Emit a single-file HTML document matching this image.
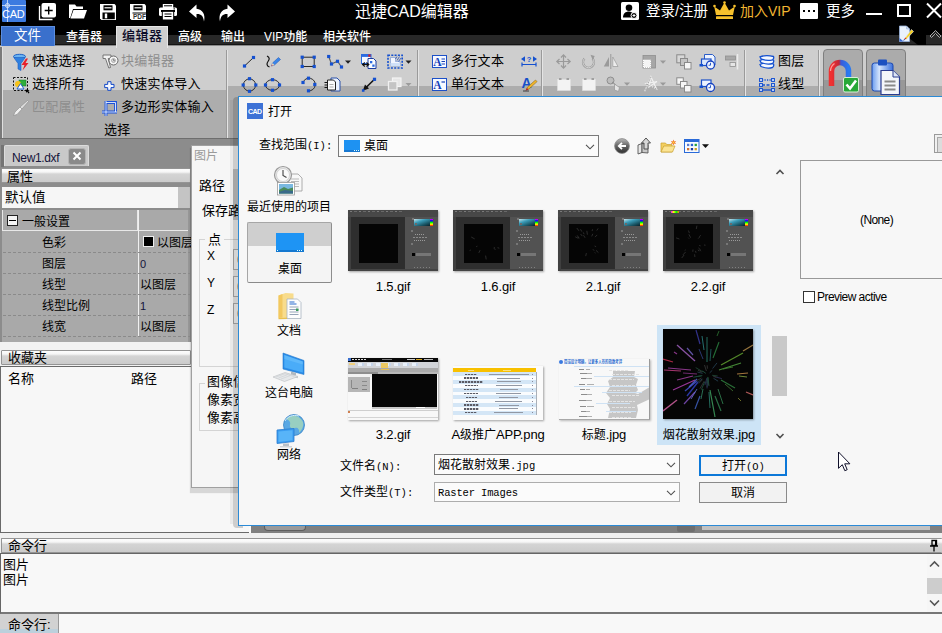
<!DOCTYPE html>
<html lang="zh-CN">
<head>
<meta charset="utf-8">
<title>迅捷CAD编辑器</title>
<style>
*{box-sizing:border-box;margin:0;padding:0}
html,body{width:942px;height:633px;overflow:hidden;background:#8c8c8c}
body{font-family:"Liberation Sans","Noto Sans CJK SC",sans-serif;font-size:13px;color:#000;position:relative}
#app{position:absolute;left:0;top:0;width:942px;height:633px;overflow:hidden;background:#8c8c8c}
.a{position:absolute}
.t{position:absolute;white-space:nowrap;line-height:1}
svg{position:absolute;overflow:visible}
/* title bar */
#title{left:0;top:0;width:942px;height:26px;background:#000}
#menu{left:0;top:26px;width:942px;height:20px;background:linear-gradient(#000 0,#000 9px,#282828 9px,#282828 18px,#141414 18px,#141414 19px,#8a8a8a 19px)}
.mt{color:#fff;font-size:12px;top:31px;font-weight:500}
/* ribbon */
#ribbon{left:0;top:46px;width:942px;height:93px;background:#cecece}
.dz{position:absolute;background:#adadad}
.rt{font-size:13px;color:#000;letter-spacing:0.3px}
.rg{color:#8e8e8e}
.sep{position:absolute;top:50px;height:88px;width:2px;background:linear-gradient(90deg,#9a9a9a 0,#9a9a9a 1px,#e4e4e4 1px)}

.hdr{background:linear-gradient(#fdfdfd 0,#f6f6f6 3px,#d4d4d4 5px,#cbcbcb 100%);border:1px solid #949494;border-radius:1px}
.pg{font-size:12px}
.dash{left:3px;width:187px;height:1px;background:repeating-linear-gradient(90deg,#8a8a8a 0,#8a8a8a 3px,transparent 3px,transparent 5px)}

.inp{width:40px;height:21px;background:#fff;border:1px solid #b4b4b4}
.inp:after{content:"0";position:absolute;left:3px;top:3px;font-size:12px;color:#888}

.od{font-size:12px}
.mono{font-family:"Liberation Mono","DejaVu Sans Mono",monospace;font-size:10.500px;letter-spacing:0}
.fl{font-size:13px;text-align:center;letter-spacing:-0.150px}
.fl span{font-size:12px;letter-spacing:0}
.th{box-shadow:1px 1px 2px rgba(0,0,0,0.350);overflow:hidden}
</style>
</head>
<body>
<div id="app">
<!-- TITLE BAR -->
<div id="title" class="a"></div>
<div id="menu" class="a"></div>
<div id="ribbon" class="a"></div>

<!-- logo -->
<div class="a" style="left:2px;top:0;width:24px;height:22px;background:#3d7be0;border-radius:1px"></div>
<div class="a" style="left:7px;top:0;width:1px;height:22px;background:#b9d0f5"></div>
<div class="a" style="left:2px;top:5px;width:24px;height:1px;background:#b9d0f5"></div>
<div class="a" style="left:5px;top:3px;width:5px;height:5px;border:1px solid #d5e3fa;border-radius:3px"></div>
<div class="t" style="left:2px;top:9px;font-size:11px;color:#fff;letter-spacing:-0.3px">CAD</div>
<!-- quick access icons -->
<svg style="left:38px;top:2px" width="20" height="20" viewBox="0 0 20 20"><path d="M1.5 4v13.5h13" fill="none" stroke="#fff" stroke-width="1.3"/><rect x="3.5" y="1" width="14.5" height="14.5" rx="2" fill="#fff"/><path d="M10.7 4.5v8M6.7 8.5h8" stroke="#000" stroke-width="1.4"/></svg>
<svg style="left:68px;top:3px" width="20" height="18" viewBox="0 0 20 18"><path d="M1 15V1.5h6l1.5 2H15V6H5L2.2 15z" fill="#fff"/><path d="M5.5 7H19l-3 8.5H2.5z" fill="#fff"/></svg>
<svg style="left:99px;top:3px" width="18" height="18" viewBox="0 0 18 18"><path d="M1 1h14.500L17 2.500V17H2.500L1 15.500z" fill="#fff"/><rect x="4.500" y="2.300" width="9" height="5" fill="#000"/><rect x="5.500" y="4.200" width="7" height="1.200" fill="#fff"/><rect x="3.500" y="9.500" width="12.300" height="6.700" fill="#000"/><rect x="5.800" y="10.500" width="2.400" height="4.800" fill="#fff"/></svg>
<svg style="left:129px;top:3px" width="18" height="18" viewBox="0 0 18 18"><path d="M1 1h14.500L17 2.500V17H2.500L1 15.500z" fill="#fff"/><rect x="4.500" y="2.300" width="9" height="5" fill="#000"/><rect x="5.500" y="4.200" width="7" height="1.200" fill="#fff"/><rect x="3.500" y="9.500" width="14" height="1" fill="#000"/><text x="10.500" y="16.300" font-size="6.500" font-weight="bold" text-anchor="middle" fill="#333" font-family="Liberation Sans, sans-serif">PDF</text></svg>
<svg style="left:158px;top:3px" width="20" height="18" viewBox="0 0 20 18"><rect x="4.800" y="1" width="10.400" height="4.500" fill="#fff"/><rect x="6" y="2.300" width="8" height="1" fill="#000"/><rect x="1" y="4.500" width="18" height="8.500" rx="1.500" fill="#fff"/><rect x="3" y="7" width="14" height="2" fill="#000"/><rect x="15.500" y="5.400" width="1.500" height="1" fill="#000"/><rect x="4.300" y="8.300" width="11.400" height="8.700" fill="#fff" stroke="#000" stroke-width="1"/><path d="M6.500 11h7M6.500 13.500h7" stroke="#000" stroke-width="1.100"/></svg>
<svg style="left:188px;top:3px" width="20" height="20" viewBox="0 0 20 20"><path d="M8.500 1.500L1 8.500l7.500 6.500V11c4.500-0.300 6.800 2 7.500 7.500 1.800-7-1.500-12.300-7.500-12.800z" fill="#fff"/></svg>
<svg style="left:216px;top:3px" width="20" height="20" viewBox="0 0 20 20"><path d="M11.500 1.500L19 8.500l-7.500 6.500V11c-4.500-0.300-6.800 2-7.500 7.500-1.800-7 1.500-12.300 7.500-12.800z" fill="#fff"/></svg>
<div class="t" style="left:355px;top:4px;font-size:16px;color:#fff">迅捷CAD编辑器</div>
<!-- right side -->
<svg style="left:621px;top:2px" width="18" height="18" viewBox="0 0 18 18"><rect x="0" y="0" width="18" height="18" rx="1.500" fill="#fff"/><circle cx="8" cy="5.800" r="3.300" fill="#000"/><path d="M2 15.500c0-4 2.500-6 6-6 2 0 3.500 1 4 2.500l-1 3.500z" fill="#000"/><circle cx="13" cy="13.500" r="3" fill="#000" stroke="#fff" stroke-width="1"/><path d="M13 12v3M11.500 13.500h3" stroke="#fff" stroke-width="1"/></svg>
<div class="t" style="left:646px;top:4px;font-size:14.500px;color:#fff">登录/注册</div>
<svg style="left:713px;top:1px" width="23" height="19" viewBox="0 0 23 19"><path d="M3 14L1.200 5.500l5.800 4L11.500 1.500l4.500 8 5.800-4L20 14z" fill="#f7c12c"/><circle cx="1.500" cy="5" r="1.300" fill="#f7c12c"/><circle cx="21.500" cy="5" r="1.300" fill="#f7c12c"/><circle cx="11.500" cy="1.500" r="1.300" fill="#f7c12c"/><rect x="3" y="15.300" width="17" height="2.700" rx="0.500" fill="#f7c12c"/></svg>
<div class="t" style="left:740px;top:4px;font-size:14px;color:#f2b632">加入VIP</div>
<div class="a" style="left:800px;top:3px;width:18px;height:16px;background:#fff;border-radius:1px"></div>
<div class="a" style="left:803px;top:10px;width:2px;height:2px;background:#000;box-shadow:5px 0 #000,10px 0 #000"></div>
<div class="t" style="left:826px;top:4px;font-size:14.500px;color:#fff">更多</div>
<div class="a" style="left:866px;top:13px;width:16px;height:2px;background:#fff"></div>
<div class="a" style="left:897px;top:4px;width:14px;height:13px;border:2px solid #fff"></div>
<svg style="left:926px;top:3px" width="16" height="15" viewBox="0 0 16 15"><path d="M1 0.500l14 14M15 0.500l-14 14" stroke="#fff" stroke-width="2" fill="none"/></svg>
<!-- menu -->
<div class="a" style="left:1px;top:26px;width:54px;height:20px;background:#3a70cc;border:1px solid #5b8ee0;border-bottom:none"></div>
<div class="t" style="left:14px;top:29px;font-size:13.500px;color:#fff">文件</div>
<div class="t mt" style="left:66px">查看器</div>
<div class="a" style="left:116px;top:26px;width:52px;height:22px;background:#cecece;border:1px solid #e6e6e6;border-bottom:none;z-index:2"></div>
<div class="t" style="left:122px;top:29px;font-size:13px;color:#0c0c28;font-weight:500;z-index:3;letter-spacing:0.5px">编辑器</div>
<div class="t mt" style="left:178px">高级</div>
<div class="t mt" style="left:221px">输出</div>
<div class="t mt" style="left:264px">VIP功能</div>
<div class="t mt" style="left:323px">相关软件</div>
<svg style="left:905px;top:35px" width="21" height="10" viewBox="0 0 21 10"><path d="M0 0L13 10h8V0z" fill="#000"/></svg>
<svg style="left:898px;top:25px" width="18" height="18" viewBox="0 0 18 18"><path d="M1.500 1h7l3 3v12.500h-10z" fill="#eaf2fc" stroke="#9ab4dc" stroke-width="0.800"/><path d="M8.500 1v3h3" fill="#c8d8f0" stroke="#9ab4dc" stroke-width="0.600"/><path d="M1.500 13l4 3.500h-4z" fill="#3a6ad0"/><path d="M13.500 4.500l2 2-7.500 8-2 0z" fill="#f4d020" stroke="#e8e8e8" stroke-width="0.600"/><path d="M6 14.500l1.500-2 1 1z" fill="#d02020"/><path d="M4.500 16l2-2 0.800 0.800z" fill="#2a50b0"/></svg>
<svg style="left:929px;top:29px" width="13" height="10" viewBox="0 0 13 10"><path d="M1 7l5.500-5.500L12 7l-1.500 1.500-4-4-4 4z" fill="#222" stroke="#b8b8b8" stroke-width="0.900"/></svg>
<div class="dz" style="left:3px;top:90px;width:223px;height:48px"></div>
<div class="dz" style="left:228px;top:86px;width:714px;height:52px"></div>

<div class="a" style="left:0;top:47px;width:2px;height:92px;background:#7a7a7a"></div>
<div class="a" style="left:2px;top:47px;width:1px;height:92px;background:#e0e0e0"></div>
<div class="a" style="left:0;top:138px;width:942px;height:1px;background:#6e6e6e"></div>
<!-- group 1 -->
<svg style="left:13px;top:54px" width="16" height="17" viewBox="0 0 16 17"><ellipse cx="6.500" cy="2.500" rx="6" ry="2.200" fill="#6db4f0" stroke="#1c62c8" stroke-width="1"/><path d="M0.800 3.500L5 9.500v5.500l3 1.500V9.500l4.200-6z" fill="#2f80e0" stroke="#1c5cc0" stroke-width="0.600"/><path d="M13 4.500L8.500 11h3L9.500 16.500 15.500 9h-3L15 4.500z" fill="#e8202a"/></svg>
<div class="t rt" style="left:32px;top:54px">快速选择</div>
<svg style="left:13px;top:77px" width="17" height="17" viewBox="0 0 17 17"><rect x="0.500" y="0.500" width="14" height="13" fill="none" stroke="#111" stroke-width="1" stroke-dasharray="2 1.500"/><rect x="6" y="3" width="7" height="6" fill="#2fae3c" stroke="#1a7a26" stroke-width="0.500"/><circle cx="5" cy="7" r="3" fill="#f6c21a"/><path d="M4 12l3.500-5.500L11 12z" fill="#fff" stroke="#2060d0" stroke-width="1"/><path d="M12.500 12.500l4 0.500-1.200 1 1.200 1.800-1 0.700-1.200-1.800-1.200 1z" fill="#000"/></svg>
<div class="t rt" style="left:32px;top:77px">选择所有</div>
<svg style="left:13px;top:100px" width="16" height="16" viewBox="0 0 16 16"><path d="M14.500 0.500l1 1L9 9 7 7z" fill="#dedede" stroke="#8a8a8a" stroke-width="0.600"/><path d="M7 7l2 2-5 5.500L0.500 15.500 2 12z" fill="#f0f0f0" stroke="#8a8a8a" stroke-width="0.600"/></svg>
<div class="t rt rg" style="left:32px;top:100px">匹配属性</div>
<svg style="left:102px;top:54px" width="17" height="15" viewBox="0 0 17 15"><path d="M1 1h8v3.500H6.200L8.500 13.500 6.800 14 3.500 4.500H1z" fill="#f2f2f2" stroke="#6a6a6a" stroke-width="0.900"/><circle cx="11.500" cy="6.500" r="4.500" fill="#f4f4f4" stroke="#6a6a6a" stroke-width="1"/><circle cx="11.500" cy="6.500" r="2" fill="#dcdcdc" stroke="#8a8a8a" stroke-width="0.600"/><path d="M11.500 5v1.700h1.500" stroke="#6a6a6a" stroke-width="0.700" fill="none"/></svg>
<div class="t rt rg" style="left:121px;top:54px">块编辑器</div>
<svg style="left:104px;top:81px" width="11" height="10" viewBox="0 0 11 10"><path d="M3.700 0.700h3.300v2.700h3v3.200h-3v2.700H3.700V6.600h-3V3.400h3z" fill="#f6f9ff" stroke="#1248c8" stroke-width="1"/></svg>
<div class="t rt" style="left:121px;top:77px">快速实体导入</div>
<svg style="left:102px;top:101px" width="16" height="16" viewBox="0 0 16 16"><path d="M4 0v15M0 11h15M4 1.500h9.500v9.500" fill="none" stroke="#1a50d8" stroke-width="2.800"/><path d="M4 0v15M0 11h15M4 1.500h9.500v9.500" fill="none" stroke="#e8f0ff" stroke-width="0.900"/></svg>
<div class="t rt" style="left:121px;top:100px">多边形实体输入</div>
<div class="t rt" style="left:104px;top:123px">选择</div>
<div class="sep" style="left:226px"></div>
<svg style="left:240px;top:53px" width="20" height="18" viewBox="240 53 20 18"><path d="M244.500 66L253.500 57.500" stroke="#2a2a2a" stroke-width="1"/><rect x="242.9" y="64.4" width="3.2" height="3.2" fill="#1450d0"/><rect x="251.9" y="55.9" width="3.2" height="3.2" fill="#1450d0"/></svg>
<svg style="left:264px;top:54px" width="18" height="16" viewBox="264 54 18 16"><path d="M267 56c3 1.500 2.500 3.500 1 5.500s-1.500 4.500 1.500 5.500" fill="none" stroke="#111" stroke-width="1.200"/><path d="M271.500 66l1-3 6-5.500 2 2-6 5.500z" fill="#3a86ea" stroke="#1c50b0" stroke-width="0.500"/><path d="M271.500 66l1-3 2 2z" fill="#f4d4b0"/><path d="M271.300 66.200l0.600-1.300 0.800 0.800z" fill="#d02020"/></svg>
<svg style="left:299px;top:54px" width="18" height="16" viewBox="299 54 18 16"><rect x="302.200" y="57.200" width="12" height="9.300" fill="none" stroke="#2a2a2a" stroke-width="1"/><rect x="300.6" y="55.6" width="3.2" height="3.2" fill="#1450d0"/><rect x="312.6" y="55.6" width="3.2" height="3.2" fill="#1450d0"/><rect x="300.6" y="64.9" width="3.2" height="3.2" fill="#1450d0"/><rect x="312.6" y="64.9" width="3.2" height="3.2" fill="#1450d0"/></svg>
<svg style="left:325px;top:53px" width="28" height="18" viewBox="325 53 28 18"><path d="M328.700 56.500L331.500 64 337.500 61.300 341.500 67" fill="none" stroke="#5a5a5a" stroke-width="1.100"/><rect x="327.1" y="54.9" width="3.2" height="3.2" fill="#1450d0"/><rect x="329.9" y="62.4" width="3.2" height="3.2" fill="#1450d0"/><rect x="335.9" y="59.7" width="3.2" height="3.2" fill="#1450d0"/><rect x="339.9" y="65.4" width="3.2" height="3.2" fill="#1450d0"/><path d="M345 60.500h6l-3 3.300z" fill="#222"/></svg>
<svg style="left:360px;top:53px" width="17" height="17" viewBox="360 53 17 17"><rect x="361.500" y="54.500" width="9.500" height="9" fill="#f4f8ff" stroke="#2a6ae0" stroke-width="1"/><rect x="361.500" y="54.500" width="9.500" height="2.400" fill="#2a6ae0"/><rect x="368.300" y="54.500" width="2.200" height="2.200" fill="#e01818"/><path d="M368 58.500h5.500l2.500 2.500v7.500h-8z" fill="#fafcff" stroke="#1c3ca0" stroke-width="1"/><rect x="370" y="61" width="2.300" height="2.300" fill="#2a6ae0"/><rect x="372.300" y="64.500" width="2.300" height="2.300" fill="#2a6ae0"/><path d="M363 64.500h5.500M366.500 62.500l2.300 2-2.300 2M364.800 62.500l-2.300 2 2.300 2" fill="none" stroke="#111" stroke-width="1.100"/></svg>
<svg style="left:386px;top:53px" width="28" height="18" viewBox="386 53 28 18"><rect x="388" y="55.200" width="14.200" height="12.800" fill="none" stroke="#1450d0" stroke-width="1.600" stroke-dasharray="2 1.300"/><path d="M390.500 57.500h5v4h4.500v4.500h-9.500z" fill="#f2f6ff" stroke="#6a8fd0" stroke-width="0.600"/><path d="M390.500 63h9.500v3h-9.500z" fill="#cfe0f8"/><path d="M397 56.500l-1.500 2.500M399.500 56.500l-2.500 4M401 58l-2.500 3.500" stroke="#2a50b0" stroke-width="0.800"/><path d="M405.500 60.500h6l-3 3.300z" fill="#222"/></svg>
<svg style="left:241px;top:76px" width="18" height="18" viewBox="241 76 18 18"><circle cx="249.500" cy="85" r="6.100" fill="none" stroke="#2a2a2a" stroke-width="1"/><rect x="247.9" y="77.1" width="3.2" height="3.2" fill="#1450d0"/><rect x="247.9" y="89.7" width="3.2" height="3.2" fill="#1450d0"/><rect x="241.6" y="83.4" width="3.2" height="3.2" fill="#1450d0"/><rect x="254.2" y="83.4" width="3.2" height="3.2" fill="#1450d0"/></svg>
<svg style="left:263px;top:76px" width="20" height="18" viewBox="263 76 20 18"><ellipse cx="272.500" cy="85" rx="7" ry="5.300" fill="none" stroke="#2a2a2a" stroke-width="1"/><rect x="270.9" y="78.1" width="3.2" height="3.2" fill="#1450d0"/><rect x="270.9" y="88.7" width="3.2" height="3.2" fill="#1450d0"/><rect x="263.9" y="83.4" width="3.2" height="3.2" fill="#1450d0"/><rect x="277.9" y="83.4" width="3.2" height="3.2" fill="#1450d0"/></svg>
<svg style="left:299px;top:75px" width="20" height="19" viewBox="299 75 20 19"><path d="M303 82.500A6.300 6.300 0 1 1 308.500 90.800" fill="none" stroke="#2a2a2a" stroke-width="1"/><rect x="301.4" y="80.9" width="3.2" height="3.2" fill="#1450d0"/><rect x="306.9" y="76.6" width="3.2" height="3.2" fill="#1450d0"/><rect x="313.2" y="82.9" width="3.2" height="3.2" fill="#1450d0"/><rect x="306.9" y="89.2" width="3.2" height="3.2" fill="#1450d0"/></svg>
<svg style="left:324px;top:77px" width="18" height="15" viewBox="324 77 18 15"><path d="M331 78h6l3 3v10h-9z" fill="#eaf1fd" stroke="#2a50a8" stroke-width="1"/><path d="M327.500 80h6l2 2v8h-8z" fill="#fafafa" stroke="#222" stroke-width="1"/><path d="M324.500 82.500h3M324.500 85h3M324.500 87.500h3" stroke="#111" stroke-width="1"/><path d="M329.500 84.500h4M329.500 87h4" stroke="#9a9a9a" stroke-width="0.800"/></svg>
<svg style="left:361px;top:77px" width="16" height="16" viewBox="361 77 16 16"><path d="M374.500 79.300L365 88.500" stroke="#111" stroke-width="1.600"/><path d="M362.800 90.800l2.200-6.300 4 4z" fill="#111"/><rect x="372.9" y="77.7" width="3.2" height="3.2" fill="#1450d0"/><rect x="361.9" y="89.2" width="2.6" height="2.6" fill="#1450d0"/></svg>
<svg style="left:386px;top:76px" width="28" height="17" viewBox="386 76 28 17"><rect x="392.500" y="78" width="8.500" height="8.500" fill="#e6e6e6" stroke="#f4f4f4" stroke-width="1.200"/><rect x="388.500" y="81.500" width="8.500" height="8.500" fill="#c4c4c4" stroke="#f0f0f0" stroke-width="1.300"/><path d="M405.500 83h6l-3 3.300z" fill="#9c9c9c"/></svg>
<div class="sep" style="left:417px"></div>
<svg style="left:432px;top:55px" width="15" height="13" viewBox="0 0 15 13"><rect x="0.500" y="0.500" width="14" height="12" fill="#f6f9ff" stroke="#1c50c8" stroke-width="1"/><text x="1.200" y="10.800" font-family="Liberation Serif, serif" font-weight="bold" font-size="11.500" fill="#1440b8">A</text><path d="M9.500 4h3.500M9.500 6.500h3.500M9.500 9h3.500" stroke="#1440b8" stroke-width="1"/></svg>
<div class="t rt" style="left:451px;top:54px">多行文本</div>
<svg style="left:432px;top:78px" width="15" height="13" viewBox="0 0 15 13"><rect x="0.500" y="0.500" width="14" height="12" fill="#f6f9ff" stroke="#1c50c8" stroke-width="1"/><text x="1.200" y="10.800" font-family="Liberation Serif, serif" font-weight="bold" font-size="11.500" fill="#1440b8">A</text><path d="M9.500 4h3.500" stroke="#1440b8" stroke-width="1.200"/></svg>
<div class="t rt" style="left:451px;top:77px">单行文本</div>
<svg style="left:521px;top:56px" width="16" height="11" viewBox="0 0 16 11"><path d="M0 3l4-2.800v5.600zM16 3l-4-2.800v5.600z" fill="#1450d0"/><text x="8" y="6" font-size="7.500" font-weight="bold" text-anchor="middle" fill="#1450d0" font-family="Liberation Sans, sans-serif">?</text><path d="M1 8.500h14M1 6.500v4M15 6.500v4" stroke="#1450d0" stroke-width="1.200" fill="none"/></svg>
<svg style="left:521px;top:76px" width="17" height="16" viewBox="0 0 17 16"><text x="0.500" y="12" font-family="Liberation Sans, sans-serif" font-weight="bold" font-size="14" fill="#1850c8">A</text><path d="M5.500 13.500l1-2.500L14.500 4l1.600 1.600L8 13z" fill="#f0b428" stroke="#7a5a18" stroke-width="0.500"/><path d="M4.500 14.800l1.300-2.800 1.800 1.600z" fill="#c02020"/><path d="M2 15h6" stroke="#222" stroke-width="0.800"/></svg>
<div class="sep" style="left:541px"></div>
<svg style="left:556px;top:54px" width="15" height="15" viewBox="0 0 15 15"><path d="M7.500 1v13M1 7.500h13" stroke="#9a9a9a" stroke-width="1.200"/><path d="M5 3.500L7.500 0.800 10 3.500M5 11.500l2.500 2.700 2.500-2.700M3.500 5L0.800 7.500 3.500 10M11.500 5l2.700 2.500-2.700 2.500" fill="none" stroke="#9a9a9a" stroke-width="1.200"/></svg>
<svg style="left:581px;top:54px" width="15" height="15" viewBox="0 0 15 15"><path d="M3.500 4.500A5.500 5.500 0 1 0 11.500 4.500" fill="none" stroke="#9a9a9a" stroke-width="2.200"/><path d="M3.500 4.500A5.500 5.500 0 1 0 11.500 4.500" fill="none" stroke="#e2e2e2" stroke-width="0.800"/><path d="M9.500 0.800l4.200 1.200-2 4z" fill="#9a9a9a"/></svg>
<svg style="left:603px;top:54px" width="16" height="15" viewBox="0 0 16 15"><path d="M7.800 0v15" stroke="#9a9a9a" stroke-width="1"/><path d="M6 3v9.500H0.800z" fill="#9a9a9a"/><path d="M9.800 3v9.500h5.200z" fill="#ededed" stroke="#9a9a9a" stroke-width="0.700"/></svg>
<svg style="left:642px;top:54px" width="26" height="15" viewBox="0 0 26 15"><rect x="1" y="1.500" width="12.500" height="12.500" fill="#a6a6a6" stroke="#8e8e8e" stroke-width="0.800"/><rect x="1.500" y="6" width="7" height="7.500" fill="#f4f4f4" stroke="#fff" stroke-width="1" stroke-dasharray="1 1"/><path d="M18 6.500h6l-3 3.300z" fill="#9a9a9a"/></svg>
<svg style="left:676px;top:54px" width="16" height="16" viewBox="0 0 16 16"><rect x="0.800" y="0.800" width="8" height="8" fill="#d8d8d8" stroke="#8a8a8a" stroke-width="1"/><rect x="4.500" y="4.500" width="7" height="7" fill="#c4c4c4" stroke="#8a8a8a" stroke-width="1"/><rect x="8.500" y="8.500" width="6.500" height="6.500" fill="#f6f6f6" stroke="#8a8a8a" stroke-width="1"/></svg>
<svg style="left:676px;top:77px" width="16" height="16" viewBox="0 0 16 16"><rect x="0.800" y="0.800" width="6.500" height="6.500" fill="#f6f6f6" stroke="#8a8a8a" stroke-width="1"/><rect x="4.500" y="4.500" width="6.500" height="6.500" fill="#f6f6f6" stroke="#8a8a8a" stroke-width="1"/><rect x="8.500" y="8.500" width="6.500" height="6.500" fill="#f6f6f6" stroke="#8a8a8a" stroke-width="1"/></svg>
<svg style="left:699px;top:53px" width="18" height="17" viewBox="0 0 18 17"><path d="M5.500 1.500h8l2.500 2.500v8h-10.500z" fill="#eef4ff" stroke="#2a5cc8" stroke-width="1"/><rect x="2.500" y="6" width="9.500" height="6.500" fill="#dce8fc" stroke="#1c50c8" stroke-width="1.200"/><rect x="0.500" y="11" width="3.500" height="2.500" fill="#1450d0"/><circle cx="11.500" cy="12" r="4" fill="#f2f6ff" stroke="#1440c0" stroke-width="1.300"/><path d="M11.500 9.800v2.400h-2" stroke="#2a5cc8" stroke-width="1" fill="none"/></svg>
<svg style="left:699px;top:79px" width="18" height="14" viewBox="0 0 18 14"><rect x="2.500" y="1" width="9.500" height="6.500" fill="#eef4ff" stroke="#1c50c8" stroke-width="1.200"/><rect x="0.500" y="6.500" width="3.500" height="2.500" fill="#1450d0"/><circle cx="11.500" cy="8.500" r="4" fill="#f2f6ff" stroke="#1440c0" stroke-width="1.300"/><path d="M11.500 6.300v2.400h-2" stroke="#2a5cc8" stroke-width="1" fill="none"/></svg>
<svg style="left:725px;top:54px" width="14" height="16" viewBox="0 0 14 16"><path d="M12.500 0v15.500" stroke="#ececec" stroke-width="1.500"/><rect x="0.500" y="2" width="10" height="4" fill="#a8a8a8" stroke="#909090" stroke-width="0.800"/><rect x="5" y="8.500" width="5.500" height="4" fill="#e6e6e6" stroke="#909090" stroke-width="0.800"/></svg>
<svg style="left:557px;top:78px" width="14" height="13" viewBox="0 0 14 13"><rect x="0.500" y="1.500" width="13" height="11" fill="#f3f3f3" stroke="#e0e0e0" stroke-width="0.600"/><rect x="2" y="0" width="2.500" height="2" fill="#a0a0a0"/><rect x="9.500" y="0" width="2.500" height="2" fill="#a0a0a0"/></svg>
<svg style="left:582px;top:78px" width="14" height="13" viewBox="0 0 14 13"><rect x="0.500" y="1.500" width="13" height="11" fill="#f3f3f3" stroke="#e0e0e0" stroke-width="0.600"/><rect x="2" y="0" width="2.500" height="2" fill="#a0a0a0"/><rect x="9.500" y="0" width="2.500" height="2" fill="#a0a0a0"/></svg>
<svg style="left:606px;top:76px" width="26" height="17" viewBox="0 0 26 17"><circle cx="4.500" cy="4.500" r="3.500" fill="#bdbdbd" stroke="#8e8e8e" stroke-width="1"/><path d="M6 6l4 3" stroke="#8e8e8e" stroke-width="1"/><path d="M8.500 8l5 3.500-1 4-4-1.500z" fill="#e4e4e4" stroke="#9a9a9a" stroke-width="0.800"/><path d="M18 6.500h6l-3 3.300z" fill="#9a9a9a"/></svg>
<svg style="left:643px;top:76px" width="26" height="17" viewBox="0 0 26 17"><path d="M8 1L1.500 15.500M8 1l-2 10 8-5.500-11 2 10.500 5.500z" fill="none" stroke="#f0f0f0" stroke-width="1.200"/><path d="M8 1L1.500 15.500M3 8l10.500 5" fill="none" stroke="#8a8a8a" stroke-width="0.700" stroke-dasharray="1.500 1"/><path d="M17 6.500h6l-3 3.300z" fill="#9a9a9a"/></svg>
<div class="sep" style="left:744px"></div>
<svg style="left:759px;top:55px" width="16" height="14" viewBox="0 0 16 14"><g fill="#f4f8ff" stroke="#1450d0" stroke-width="1.300"><path d="M1 9.500c4-2 9-2 13.500-0.500 0.500 1.500 0.500 2.500-1 3.500-4 1-8 0.500-11.500-1z"/><path d="M1 5.500c4-2 9-2 13.500-0.500 0.500 1.500 0.500 2.500-1 3.500-4 1-8 0.500-11.500-1z"/><path d="M1 1.800c4-1.500 9-1.500 13.500-0.300 0.500 1.500 0.500 2.500-1 3.300-4 1-8 0.500-11.500-1z"/></g></svg>
<div class="t rt" style="left:778px;top:54px">图层</div>
<svg style="left:759px;top:78px" width="16" height="14" viewBox="0 0 16 14"><g stroke="#1450d0" stroke-width="1.300" fill="none"><path d="M3 2h10" stroke-dasharray="1.200 1.300"/><path d="M3 7h10" stroke-dasharray="3 1.500"/><path d="M3 12h10"/></g><g fill="#fff" stroke="#1450d0" stroke-width="1.100"><rect x="0.600" y="0.600" width="2.800" height="2.800"/><rect x="12.600" y="0.600" width="2.800" height="2.800"/><rect x="0.600" y="5.600" width="2.800" height="2.800"/><rect x="12.600" y="5.600" width="2.800" height="2.800"/><rect x="0.600" y="10.600" width="2.800" height="2.800"/><rect x="12.600" y="10.600" width="2.800" height="2.800"/></g></svg>
<div class="t rt" style="left:778px;top:77px">线型</div>
<div class="sep" style="left:818px"></div>
<div class="a" style="left:823px;top:49px;width:40px;height:60px;border:1px solid #7e7e7e;border-radius:4px 4px 0 0;background:linear-gradient(#ababab 0,#ababab 30px,#989898 30px)"></div>
<div class="a" style="left:866px;top:49px;width:40px;height:60px;border:1px solid #7e7e7e;border-radius:4px 4px 0 0;background:linear-gradient(#ababab 0,#ababab 30px,#989898 30px)"></div>
<svg style="left:826px;top:58px" width="36" height="36" viewBox="0 0 36 36"><defs><linearGradient id="mg" x1="0" x2="1"><stop offset="0" stop-color="#f03030"/><stop offset="0.450" stop-color="#c02838"/><stop offset="0.550" stop-color="#3a5ad8"/><stop offset="1" stop-color="#2a7af0"/></linearGradient></defs><path d="M5.500 28V13a8.500 8.500 0 0 1 17 0v8" fill="none" stroke="url(#mg)" stroke-width="5.500"/><path d="M4.500 13a9.500 9.500 0 0 1 4-7.500" stroke="#ff9a9a" stroke-width="1.200" fill="none"/><rect x="17.500" y="19.500" width="15" height="14.500" rx="1.500" fill="#28a838" stroke="#d8f0d8" stroke-width="1"/><path d="M20.500 26.500l3.500 4 6-8" fill="none" stroke="#fff" stroke-width="2.600"/></svg>
<svg style="left:871px;top:58px" width="32" height="38" viewBox="0 0 32 38"><defs><linearGradient id="cb" x1="0" x2="1"><stop offset="0" stop-color="#6a9cf0"/><stop offset="0.350" stop-color="#d4e4fc"/><stop offset="1" stop-color="#3a70dc"/></linearGradient></defs><rect x="1" y="5" width="21" height="28" rx="2.500" fill="url(#cb)" stroke="#1a48b0" stroke-width="1"/><rect x="7" y="1.500" width="9" height="6" rx="1" fill="#1c50c0"/><path d="M10 12.500h12l6.500 6.500V36.500H10z" fill="#f4f6fa" stroke="#2a3c90" stroke-width="1.200"/><path d="M22 12.500v6.500h6.500" fill="#dfe6f4" stroke="#2a3c90" stroke-width="1"/><path d="M13.500 23.500h11M13.500 27.500h11M13.500 31.500h11" stroke="#8a8a8a" stroke-width="2"/></svg>

<!-- doc tab -->
<div class="a" style="left:4px;top:145px;width:85px;height:21px;background:#c9c9c9;border:1px solid #dcdcdc;border-bottom:none;border-radius:2px 2px 0 0"></div>
<div class="t" style="left:12px;top:152px;font-size:12px;color:#14143a;letter-spacing:-0.35px">New1.dxf</div>
<div class="a" style="left:68px;top:148px;width:18px;height:17px;background:#8a8a8a;border:1px solid #b4b4b4;border-radius:3px"></div>
<svg style="left:72px;top:151px" width="10" height="10" viewBox="0 0 10 10"><path d="M1.500 1.500l7 7M8.500 1.500l-7 7" stroke="#fff" stroke-width="2"/></svg>
<!-- left panel -->
<div class="a" style="left:1px;top:145px;width:3px;height:22px;background:#747474"></div>
<div class="a hdr" style="left:1px;top:168px;width:190px;height:15px"></div>
<div class="t" style="left:7px;top:170px;font-size:13px">属性</div>
<div class="a" style="left:2px;top:187px;width:188px;height:21px;background:#f6f6f6"></div>
<div class="a" style="left:178px;top:187px;width:12px;height:21px;background:#c4c4c4"></div>
<div class="t" style="left:5px;top:191px;font-size:13.500px">默认值</div>
<div class="a" style="left:2px;top:210px;width:188px;height:132px;background:#a9a9a9"></div>
<div class="a" style="left:2px;top:210px;width:136px;height:21px;border:1px solid #e8e8e8;border-top:none"></div>
<div class="a" style="left:138px;top:210px;width:1px;height:127px;background:#f0f0f0"></div>
<div class="a" style="left:139px;top:230px;width:51px;height:1px;background:#e8e8e8"></div>
<div class="a" style="left:188px;top:210px;width:2px;height:132px;background:#969696"></div>
<div class="a" style="left:7px;top:215px;width:11px;height:11px;background:#f4f4f4;border:1px solid #222"></div>
<div class="a" style="left:9px;top:220px;width:7px;height:1px;background:#000"></div>
<div class="t pg" style="left:22px;top:216px">一般设置</div>
<div class="a dash" style="top:252px"></div><div class="a dash" style="top:273px"></div><div class="a dash" style="top:294px"></div><div class="a dash" style="top:315px"></div><div class="a dash" style="top:336px"></div>
<div class="t pg" style="left:42px;top:237px">色彩</div>
<div class="t pg" style="left:42px;top:258px">图层</div>
<div class="t pg" style="left:42px;top:279px">线型</div>
<div class="t pg" style="left:42px;top:300px">线型比例</div>
<div class="t pg" style="left:42px;top:321px">线宽</div>
<div class="a" style="left:143px;top:236px;width:11px;height:11px;background:#000;border:1px solid #eee"></div>
<div class="t pg" style="left:157px;top:237px">以图层</div>
<div class="t pg" style="left:140px;top:259px;font-size:11px;color:#14143a">0</div>
<div class="t pg" style="left:140px;top:279px">以图层</div>
<div class="t pg" style="left:140px;top:301px;font-size:11px;color:#14143a">1</div>
<div class="t pg" style="left:140px;top:321px">以图层</div>
<div class="a" style="left:0;top:342px;width:191px;height:25px;background:#f2f2f2"></div>
<div class="a hdr" style="left:1px;top:350px;width:190px;height:15px"></div>
<div class="t" style="left:8px;top:351px;font-size:13px">收藏夹</div>
<div class="a" style="left:0;top:366px;width:250px;height:167px;background:#f7f7f7;border:1px solid #6a6a6a;border-right:none"></div>
<div class="t" style="left:8px;top:372px;font-size:13px">名称</div>
<div class="t" style="left:131px;top:372px;font-size:13px">路径</div>
<!-- area behind dialog bottom -->
<div class="a" style="left:250px;top:366px;width:692px;height:167px;background:#808080"></div>
<div class="a" style="left:0;top:533px;width:942px;height:21px;background:#f0f0f0"></div>
<div class="a" style="left:249px;top:366px;width:2px;height:167px;background:#fafafa"></div>
<div class="a" style="left:264px;top:525px;width:42px;height:6px;background:#9a9a9a;border:1px solid #5e5e5e;border-top:none;border-radius:0 0 4px 4px"></div>
<div class="a" style="left:677px;top:525px;width:18px;height:7px;background:#6e6e6e;border-radius:0 0 2px 2px"></div>
<div class="a" style="left:702px;top:526px;width:228px;height:4px;background:#c2c2c2"></div>
<!-- command panel -->
<div class="a hdr" style="left:1px;top:538px;width:941px;height:15px;border-right:none"></div>
<div class="t" style="left:8px;top:539px;font-size:13px">命令行</div>
<svg style="left:929px;top:540px" width="10" height="12" viewBox="0 0 10 12"><path d="M3 0.500h4.500v5H3zM1 6h8M5 6v5.500" stroke="#000" stroke-width="1.300" fill="none"/><path d="M6 0.500h1.500v5H6z" fill="#000"/></svg>
<div class="a" style="left:0;top:553px;width:942px;height:61px;background:#f8f8f8;border:1px solid #666;border-right:none;border-bottom:2px solid #777"></div>
<div class="t" style="left:3px;top:558px;font-size:13px">图片</div>
<div class="t" style="left:3px;top:573px;font-size:13px">图片</div>
<div class="a" style="left:927px;top:554px;width:15px;height:58px;background:#f6f6f6"></div>
<svg style="left:928px;top:560px" width="13" height="8" viewBox="0 0 13 8"><path d="M2 6.500l4.500-4.500 4.500 4.500" stroke="#555" stroke-width="1.600" fill="none"/></svg>
<div class="a" style="left:927px;top:578px;width:15px;height:16px;background:#cdcdcd"></div>
<svg style="left:928px;top:599px" width="13" height="8" viewBox="0 0 13 8"><path d="M2 1.500l4.500 4.500 4.500-4.500" stroke="#555" stroke-width="1.600" fill="none"/></svg>
<div class="a" style="left:0;top:614px;width:942px;height:19px;background:#f8f8f8"></div>
<div class="a" style="left:0;top:614px;width:59px;height:19px;background:linear-gradient(#d2d2d2 0,#d2d2d2 15px,#bcd0dc 15px);border-right:1px solid #999"></div>
<div class="t" style="left:8px;top:618px;font-size:13px">命令行:</div>

<!-- 图片 dialog -->
<div class="a" style="left:191px;top:145px;width:60px;height:343px;background:#f6f6f6;border:1px solid #a0a0a0;box-shadow:0 4px 1px 1px rgba(0,0,0,0.130)"></div>
<div class="t" style="left:194px;top:150px;font-size:12px;color:#9a9a9a">图片</div>
<div class="a" style="left:233px;top:169px;width:10px;height:51px;background:#c8c8c8"></div>
<div class="t" style="left:199px;top:179px;font-size:13px">路径</div>
<div class="t" style="left:202px;top:204px;font-size:13px">保存路径</div>
<div class="a" style="left:199px;top:239px;width:60px;height:128px;border:1px solid #d4d4d4"></div>
<div class="t" style="left:205px;top:233px;font-size:13px;background:#f6f6f6;padding:0 3px">点</div>
<div class="t" style="left:207px;top:250px;font-size:12px">X</div>
<div class="t" style="left:207px;top:277px;font-size:12px">Y</div>
<div class="t" style="left:207px;top:304px;font-size:12px">Z</div>
<div class="a inp" style="left:233px;top:249px"></div><div class="a inp" style="left:233px;top:276px"></div><div class="a inp" style="left:233px;top:303px"></div>
<div class="a" style="left:199px;top:383px;width:60px;height:48px;border:1px solid #d4d4d4"></div>
<div class="t" style="left:205px;top:375px;font-size:13px;background:#f6f6f6;padding:0 2px">图像信息</div>
<div class="t" style="left:207px;top:393px;font-size:13px">像素宽</div>
<div class="t" style="left:207px;top:411px;font-size:13px">像素高</div>

<!-- Open dialog -->
<div class="a" style="left:233px;top:97px;width:10px;height:431px;background:rgba(0,0,0,0.170);border-radius:4px 0 0 4px"></div>
<div class="a" style="left:230px;top:100px;width:3px;height:424px;background:rgba(0,0,0,0.050)"></div>
<div class="a" id="odlg" style="left:238px;top:96px;width:720px;height:430px;background:#f7f7f7;border:1px solid #2b8ad6"></div>
<div class="a" style="left:247px;top:103px;width:16px;height:16px;background:#3d72d6"></div>
<div class="t" style="left:248px;top:108px;font-size:7px;font-weight:bold;color:#fff;letter-spacing:-0.600px">CAD</div>
<div class="t od" style="left:268px;top:106px">打开</div>
<div class="t od" style="left:259px;top:139px">查找范围<span class="mono">(I):</span></div>
<div class="a" style="left:338px;top:135px;width:261px;height:22px;background:#fbfbfb;border:1px solid #7a7a7a"></div>
<div class="a" style="left:344px;top:140px;width:16px;height:12px;background:#1e92f2;border-bottom:2px solid #1878d0"></div>
<div class="a" style="left:354px;top:150px;width:5px;height:1px;background:repeating-linear-gradient(90deg,#dff 0,#dff 1px,transparent 1px,transparent 2px)"></div>
<div class="t od" style="left:364px;top:140px">桌面</div>
<svg style="left:585px;top:144px" width="10" height="6" viewBox="0 0 10 6"><path d="M1 0.800l4 4 4-4" fill="none" stroke="#505050" stroke-width="1.100"/></svg>
<!-- toolbar icons -->
<svg style="left:614px;top:138px" width="16" height="16" viewBox="0 0 16 16"><defs><linearGradient id="bk" x1="0" y1="0" x2="0" y2="1"><stop offset="0" stop-color="#b8b8b8"/><stop offset="0.450" stop-color="#6a6a6a"/><stop offset="1" stop-color="#2e2e2e"/></linearGradient></defs><circle cx="8" cy="8" r="7.400" fill="url(#bk)" stroke="#8a8a8a" stroke-width="0.800"/><path d="M12 8H5.500M8 4.800L4.800 8 8 11.200" stroke="#fff" stroke-width="1.800" fill="none"/></svg>
<svg style="left:636px;top:137px" width="16" height="18" viewBox="0 0 16 18"><path d="M2 8l4-1.500v9L2 17z" fill="#e8e8e8" stroke="#555" stroke-width="0.900"/><path d="M6 6.500l6 1v8.500l-6-0.500z" fill="#c8c8c8" stroke="#555" stroke-width="0.900"/><path d="M10 1l4.500 5h-2.500v6h-4V6H5.500z" fill="#d8d8d8" stroke="#444" stroke-width="0.900"/></svg>
<svg style="left:660px;top:139px" width="18" height="15" viewBox="0 0 18 15"><path d="M1 13V4h4.500l1.200 1.500H12V13z" fill="#f4d060" stroke="#c8a030" stroke-width="0.700"/><path d="M1 13l2.800-6H15l-2.500 6z" fill="#fbe494" stroke="#c8a030" stroke-width="0.700"/><path d="M13.500 0.500l0.700 1.900 2-0.500-1.300 1.600 1.300 1.600-2-0.500-0.700 1.900-0.700-1.900-2 0.500 1.300-1.600-1.300-1.600 2 0.500z" fill="#f06a18"/><circle cx="13.500" cy="3.500" r="1" fill="#ffd040"/></svg>
<svg style="left:684px;top:139px" width="26" height="14" viewBox="0 0 26 14"><rect x="0.500" y="0.500" width="14.500" height="13" fill="#f8fbff" stroke="#2a6ad8" stroke-width="1"/><rect x="0.500" y="0.500" width="14.500" height="2.500" fill="#2a6ad8"/><g><rect x="3" y="4.800" width="2.300" height="2.300" fill="#5a7ad0"/><rect x="6.800" y="4.800" width="2.300" height="2.300" fill="#2a60d0"/><rect x="10.600" y="4.800" width="2.300" height="2.300" fill="#20a040"/><rect x="3" y="9" width="2.300" height="2.300" fill="#d07030"/><rect x="6.800" y="9" width="2.300" height="2.300" fill="#1a3aa0"/><rect x="10.600" y="9" width="2.300" height="2.300" fill="#d0a020"/></g><path d="M18 5.300h7l-3.500 3.700z" fill="#111"/></svg>
<div class="a" style="left:934px;top:134px;width:12px;height:19px;background:#dcdcdc;border:1px solid #9a9a9a;box-shadow:inset 2px 2px 0 #f0f0f0,inset 3px 3px 0 #a8a8a8"></div>
<!-- preview -->
<div class="a" style="left:800px;top:160px;width:150px;height:119px;background:#f7f7f7;border:1px solid #999"></div>
<div class="t" style="left:860px;top:214px;font-size:12px;letter-spacing:-0.600px">(None)</div>
<div class="a" style="left:803px;top:291px;width:12px;height:12px;background:#fff;border:1px solid #333"></div>
<div class="t" style="left:817px;top:291px;font-size:12px;letter-spacing:-0.550px">Preview active</div>
<!-- places bar -->
<div class="a" style="left:247px;top:222px;width:85px;height:61px;border:1px solid #a6a6a6;border-bottom-color:#8a8a8a;border-right-color:#8e8e8e;border-radius:2px;background:linear-gradient(#cfcfcf 0,#cfcfcf 23px,#f4f4f4 23px)"></div>
<div class="t od" style="left:247px;top:201px">最近使用的项目</div>
<div class="t od" style="left:278px;top:263px">桌面</div>
<div class="t od" style="left:277px;top:325px">文档</div>
<div class="t od" style="left:265px;top:387px">这台电脑</div>
<div class="t od" style="left:277px;top:449px">网络</div>
<!-- recent icon -->
<svg style="left:273px;top:165px" width="32" height="32" viewBox="0 0 32 32"><path d="M15 9h10l4 4v13H15z" fill="#f8f8f8" stroke="#9a9a9a" stroke-width="0.800"/><path d="M18 14h8M18 16.500h8M18 19h8M18 21.500h8" stroke="#aaa" stroke-width="0.800"/><circle cx="10" cy="10" r="8.500" fill="#e8e8e8" stroke="#9a9a9a" stroke-width="1.200"/><circle cx="10" cy="10" r="6.500" fill="#fafafa" stroke="#c0c0c0" stroke-width="0.600"/><path d="M10 5v5.500l3.500 2" stroke="#444" stroke-width="1.100" fill="none"/><rect x="4.500" y="17.500" width="17" height="12.500" fill="#fff" stroke="#9a9a9a" stroke-width="0.800"/><rect x="6" y="19" width="14" height="9.500" fill="#7ab8e0"/><path d="M6 25l5-3 4 2 5-1.500v6H6z" fill="#4a8a5a"/><path d="M6 27l6-2 8 1v2.500H6z" fill="#3a6a8a"/></svg>
<!-- desktop icon -->
<div class="a" style="left:276px;top:233px;width:28px;height:19px;background:#1e94f4;border-bottom:2px solid #1478d0"></div>
<div class="a" style="left:277px;top:250px;width:26px;height:1px;background:linear-gradient(90deg,#dff 0,#dff 1px,transparent 1px,transparent 20px,#dff 20px,#dff 21px,transparent 21px,transparent 22px,#dff 22px,#dff 23px,transparent 23px,transparent 24px,#dff 24px,#dff 25px,transparent 25px)"></div>
<!-- documents icon -->
<svg style="left:277px;top:291px" width="26" height="30" viewBox="0 0 26 30"><path d="M1.500 4.500l7-2.500 8 0.500v24l-15 0.500z" fill="#f8dc8c"/><path d="M1.500 4.500l4-1.500v23.500l-4 0.500z" fill="#f2c860"/><path d="M10 8h10.500l3.500 3.500v16H10z" fill="#fdfdfd" stroke="#a8b4c0" stroke-width="0.800"/><path d="M12.500 11h5M12.500 13h7" stroke="#2a6cd0" stroke-width="1.200"/><path d="M12.500 16h9M12.500 18.500h9M12.500 21h9M12.500 23.500h9" stroke="#8a9ab0" stroke-width="0.900"/><rect x="19" y="17.500" width="2.500" height="2.500" fill="#3a9a5a"/><path d="M1.500 27l8.500-0.500v1.500l-8.500 0.300z" fill="#e8c050"/></svg>
<!-- this pc icon -->
<svg style="left:272px;top:351px" width="34" height="32" viewBox="0 0 34 32"><path d="M11 2l21 7.500v14L11 18z" fill="#2a8ce8" stroke="#2478cc" stroke-width="0.600"/><path d="M12.300 4l18.500 6.600v11L12.300 16.500z" fill="#4aacf8"/><path d="M12.300 4l18.500 6.600v3L12.300 8z" fill="#6cc0fc" opacity=".6"/><path d="M19 20.500l5 1.500v2.500l-5-1z" fill="#b0b8c0"/><path d="M16 23.500l10 2.500v1.200l-10-2.200z" fill="#c8ccd0"/><path d="M1 26l12-4.500 13 4-13.500 5z" fill="#e6e8ea" stroke="#b8bcc0" stroke-width="0.600"/><path d="M4 26l9-3.300 9.500 3M6.500 27l9-3.300M9 28l9-3.300" stroke="#c4c8cc" stroke-width="0.500" fill="none"/></svg>
<!-- network icon -->
<svg style="left:274px;top:413px" width="32" height="36" viewBox="0 0 32 36"><circle cx="20" cy="12" r="10.500" fill="#5aa8e4" stroke="#3a84c4" stroke-width="0.800"/><path d="M12 6c3 1 5 3 4 6s3 4 5 3 5 1 4 5c3-3 5-7 4-11-3-6-10-9-17-3z" fill="#a8d8b8" opacity=".8"/><path d="M11 8c2-4 8-7 14-5" stroke="#d0ecff" stroke-width="1" fill="none"/><path d="M3 17l17-1.500v13L3 30.500z" fill="#3a9cf0" stroke="#2a7cd0" stroke-width="0.800"/><path d="M4.500 18.500l14-1.200v10L4.500 29z" fill="#58b4f8"/><path d="M9 30.500h6v2.500H9z" fill="#b8c0c8"/><path d="M6 33h12v1.500H6z" fill="#d0d4d8"/></svg>
<!-- file list scrollbar -->
<svg style="left:775px;top:168px" width="10" height="8" viewBox="0 0 10 8"><path d="M1.500 6l3.500-3.500 3.500 3.500" fill="none" stroke="#505050" stroke-width="1.600"/></svg>
<div class="a" style="left:772px;top:336px;width:15px;height:60px;background:#c9c9c9"></div>
<svg style="left:775px;top:432px" width="10" height="8" viewBox="0 0 10 8"><path d="M1.500 2l3.500 3.500 3.500-3.500" fill="none" stroke="#505050" stroke-width="1.600"/></svg>
<!-- selected highlight -->
<div class="a" style="left:657px;top:325px;width:104px;height:120px;background:#cde4f6"></div>
<div class="a th" style="left:348px;top:210px;width:90px;height:61px;background:#525252"><div class="a" style="left:0;top:0;width:90px;height:4px;background:#474747"></div><div class="a" style="left:2px;top:1px;width:52px;height:1px;background:repeating-linear-gradient(90deg,#7a7a7a 0,#7a7a7a 2px,transparent 2px,transparent 4px,#686868 4px,#686868 7px,transparent 7px,transparent 9px)"></div><div class="a" style="left:4px;top:5px;width:40px;height:1px;background:repeating-linear-gradient(90deg,#747474 0,#747474 5px,transparent 5px,transparent 13px)"></div><div class="a" style="left:1px;top:9px;width:2px;height:48px;background:repeating-linear-gradient(#8e8e8e 0,#8e8e8e 1px,transparent 1px,transparent 3px)"></div><div class="a" style="left:66px;top:57px;width:18px;height:1px;background:repeating-linear-gradient(90deg,#808080 0,#808080 1px,transparent 1px,transparent 3px)"></div><div class="a" style="left:0;top:4px;width:90px;height:3px;background:#484848"></div><div class="a" style="left:0;top:7px;width:3px;height:54px;background:#404040"></div><div class="a" style="left:3px;top:7px;width:54px;height:52px;background:#2e2e2e"></div><div class="a" style="left:11px;top:14px;width:39px;height:39px;background:#050505"></div><div class="a" style="left:66px;top:9px;width:16px;height:7px;background:linear-gradient(160deg,#c8e4ea 0,#3a9cb8 35%,#1a5868 70%,#082028 100%)"></div><div class="a" style="left:82px;top:9px;width:3px;height:7px;background:linear-gradient(#f0f,#00f,#0f0,#ff0,#f00)"></div><div class="a" style="left:64px;top:43px;width:3px;height:3px;background:#000"></div><div class="a" style="left:68px;top:43px;width:15px;height:3px;background:#767676"></div><div class="a" style="left:67px;top:24px;width:10px;height:1px;background:repeating-linear-gradient(90deg,#9a9a9a 0,#9a9a9a 1px,transparent 1px,transparent 2px)"></div><div class="a" style="left:65px;top:27px;width:14px;height:1px;background:repeating-linear-gradient(90deg,#8c8c8c 0,#8c8c8c 2px,transparent 2px,transparent 3px)"></div><div class="a" style="left:66px;top:30px;width:12px;height:1px;background:repeating-linear-gradient(90deg,#9a9a9a 0,#9a9a9a 1px,transparent 1px,transparent 2px)"></div><div class="a" style="left:63px;top:20px;width:2px;height:2px;background:#777;box-shadow:0 13px 0 #777,1px -12px 0 #777,4px -7px 0 #6a6a6a"></div><div class="a" style="left:3px;top:59px;width:87px;height:2px;background:#444"></div></div><div class="a th" style="left:453px;top:210px;width:90px;height:61px;background:#525252"><div class="a" style="left:0;top:0;width:90px;height:4px;background:#474747"></div><div class="a" style="left:2px;top:1px;width:52px;height:1px;background:repeating-linear-gradient(90deg,#7a7a7a 0,#7a7a7a 2px,transparent 2px,transparent 4px,#686868 4px,#686868 7px,transparent 7px,transparent 9px)"></div><div class="a" style="left:4px;top:5px;width:40px;height:1px;background:repeating-linear-gradient(90deg,#747474 0,#747474 5px,transparent 5px,transparent 13px)"></div><div class="a" style="left:1px;top:9px;width:2px;height:48px;background:repeating-linear-gradient(#8e8e8e 0,#8e8e8e 1px,transparent 1px,transparent 3px)"></div><div class="a" style="left:66px;top:57px;width:18px;height:1px;background:repeating-linear-gradient(90deg,#808080 0,#808080 1px,transparent 1px,transparent 3px)"></div><div class="a" style="left:0;top:4px;width:90px;height:3px;background:#484848"></div><div class="a" style="left:0;top:7px;width:3px;height:54px;background:#404040"></div><div class="a" style="left:3px;top:7px;width:54px;height:52px;background:#2e2e2e"></div><div class="a" style="left:11px;top:14px;width:39px;height:39px;background:#050505"></div><div class="a" style="left:66px;top:9px;width:16px;height:7px;background:linear-gradient(160deg,#c8e4ea 0,#3a9cb8 35%,#1a5868 70%,#082028 100%)"></div><div class="a" style="left:82px;top:9px;width:3px;height:7px;background:linear-gradient(#f0f,#00f,#0f0,#ff0,#f00)"></div><div class="a" style="left:64px;top:43px;width:3px;height:3px;background:#000"></div><div class="a" style="left:68px;top:43px;width:15px;height:3px;background:#767676"></div><div class="a" style="left:67px;top:24px;width:10px;height:1px;background:repeating-linear-gradient(90deg,#9a9a9a 0,#9a9a9a 1px,transparent 1px,transparent 2px)"></div><div class="a" style="left:65px;top:27px;width:14px;height:1px;background:repeating-linear-gradient(90deg,#8c8c8c 0,#8c8c8c 2px,transparent 2px,transparent 3px)"></div><div class="a" style="left:66px;top:30px;width:12px;height:1px;background:repeating-linear-gradient(90deg,#9a9a9a 0,#9a9a9a 1px,transparent 1px,transparent 2px)"></div><div class="a" style="left:63px;top:20px;width:2px;height:2px;background:#777;box-shadow:0 13px 0 #777,1px -12px 0 #777,4px -7px 0 #6a6a6a"></div><div class="a" style="left:3px;top:59px;width:87px;height:2px;background:#444"></div><svg style="left:11px;top:14px" width="39" height="39" viewBox="0 0 39 39"><path d="M16.1 26.2L14.8 28.9" stroke="#444" stroke-width="0.600"/><path d="M29.7 24.5L31.6 25.4" stroke="#444" stroke-width="0.600"/><path d="M29.8 23.4L30.9 23.8" stroke="#444" stroke-width="0.600"/><path d="M13.4 22.2L12.2 22.7" stroke="#444" stroke-width="0.600"/><path d="M6.8 26.0L5.6 26.6" stroke="#444" stroke-width="0.600"/><path d="M21.6 31.6L22.2 35.4" stroke="#444" stroke-width="0.600"/><path d="M10.7 14.9L7.2 13.0" stroke="#444" stroke-width="0.600"/><path d="M33.5 23.7L35.3 24.2" stroke="#444" stroke-width="0.600"/></svg></div><div class="a th" style="left:558px;top:210px;width:90px;height:61px;background:#525252"><div class="a" style="left:0;top:0;width:90px;height:4px;background:#474747"></div><div class="a" style="left:2px;top:1px;width:52px;height:1px;background:repeating-linear-gradient(90deg,#7a7a7a 0,#7a7a7a 2px,transparent 2px,transparent 4px,#686868 4px,#686868 7px,transparent 7px,transparent 9px)"></div><div class="a" style="left:4px;top:5px;width:40px;height:1px;background:repeating-linear-gradient(90deg,#747474 0,#747474 5px,transparent 5px,transparent 13px)"></div><div class="a" style="left:1px;top:9px;width:2px;height:48px;background:repeating-linear-gradient(#8e8e8e 0,#8e8e8e 1px,transparent 1px,transparent 3px)"></div><div class="a" style="left:66px;top:57px;width:18px;height:1px;background:repeating-linear-gradient(90deg,#808080 0,#808080 1px,transparent 1px,transparent 3px)"></div><div class="a" style="left:0;top:4px;width:90px;height:3px;background:#484848"></div><div class="a" style="left:0;top:7px;width:3px;height:54px;background:#404040"></div><div class="a" style="left:3px;top:7px;width:54px;height:52px;background:#2e2e2e"></div><div class="a" style="left:11px;top:14px;width:39px;height:39px;background:#050505"></div><div class="a" style="left:66px;top:9px;width:16px;height:7px;background:linear-gradient(160deg,#c8e4ea 0,#3a9cb8 35%,#1a5868 70%,#082028 100%)"></div><div class="a" style="left:82px;top:9px;width:3px;height:7px;background:linear-gradient(#f0f,#00f,#0f0,#ff0,#f00)"></div><div class="a" style="left:64px;top:43px;width:3px;height:3px;background:#000"></div><div class="a" style="left:68px;top:43px;width:15px;height:3px;background:#767676"></div><div class="a" style="left:67px;top:24px;width:10px;height:1px;background:repeating-linear-gradient(90deg,#9a9a9a 0,#9a9a9a 1px,transparent 1px,transparent 2px)"></div><div class="a" style="left:65px;top:27px;width:14px;height:1px;background:repeating-linear-gradient(90deg,#8c8c8c 0,#8c8c8c 2px,transparent 2px,transparent 3px)"></div><div class="a" style="left:66px;top:30px;width:12px;height:1px;background:repeating-linear-gradient(90deg,#9a9a9a 0,#9a9a9a 1px,transparent 1px,transparent 2px)"></div><div class="a" style="left:63px;top:20px;width:2px;height:2px;background:#777;box-shadow:0 13px 0 #777,1px -12px 0 #777,4px -7px 0 #6a6a6a"></div><div class="a" style="left:3px;top:59px;width:87px;height:2px;background:#444"></div><svg style="left:11px;top:14px" width="39" height="39" viewBox="0 0 39 39"><path d="M23.9 25.2L25.1 26.7" stroke="#444" stroke-width="0.600"/><path d="M22.7 12.4L23.8 9.8" stroke="#444" stroke-width="0.600"/><path d="M13.3 12.1L11.6 10.0" stroke="#444" stroke-width="0.600"/><path d="M25.6 22.0L27.1 22.7" stroke="#444" stroke-width="0.600"/><path d="M15.1 10.2L14.3 8.4" stroke="#444" stroke-width="0.600"/><path d="M10.5 14.1L8.8 13.1" stroke="#444" stroke-width="0.600"/><path d="M23.1 7.0L23.6 5.3" stroke="#444" stroke-width="0.600"/><path d="M9.5 14.4L6.2 12.8" stroke="#444" stroke-width="0.600"/><path d="M18.4 10.7L17.8 6.8" stroke="#444" stroke-width="0.600"/><path d="M27.0 26.4L29.4 28.6" stroke="#444" stroke-width="0.600"/><path d="M25.8 28.4L26.4 29.3" stroke="#444" stroke-width="0.600"/><path d="M12.8 7.6L11.5 5.2" stroke="#444" stroke-width="0.600"/><path d="M26.0 13.1L28.2 10.9" stroke="#444" stroke-width="0.600"/><path d="M9.7 12.9L7.8 11.6" stroke="#444" stroke-width="0.600"/><path d="M27.8 6.5L29.1 4.4" stroke="#444" stroke-width="0.600"/><path d="M16.1 13.8L14.5 11.2" stroke="#444" stroke-width="0.600"/><path d="M9.9 6.8L7.8 4.0" stroke="#444" stroke-width="0.600"/><path d="M17.4 29.1L16.7 32.1" stroke="#444" stroke-width="0.600"/></svg></div><div class="a th" style="left:663px;top:210px;width:90px;height:61px;background:#525252"><div class="a" style="left:0;top:0;width:90px;height:4px;background:#474747"></div><div class="a" style="left:2px;top:1px;width:52px;height:1px;background:repeating-linear-gradient(90deg,#7a7a7a 0,#7a7a7a 2px,transparent 2px,transparent 4px,#686868 4px,#686868 7px,transparent 7px,transparent 9px)"></div><div class="a" style="left:4px;top:5px;width:40px;height:1px;background:repeating-linear-gradient(90deg,#747474 0,#747474 5px,transparent 5px,transparent 13px)"></div><div class="a" style="left:1px;top:9px;width:2px;height:48px;background:repeating-linear-gradient(#8e8e8e 0,#8e8e8e 1px,transparent 1px,transparent 3px)"></div><div class="a" style="left:66px;top:57px;width:18px;height:1px;background:repeating-linear-gradient(90deg,#808080 0,#808080 1px,transparent 1px,transparent 3px)"></div><div class="a" style="left:0;top:4px;width:90px;height:3px;background:#484848"></div><div class="a" style="left:0;top:7px;width:3px;height:54px;background:#404040"></div><div class="a" style="left:3px;top:7px;width:54px;height:52px;background:#2e2e2e"></div><div class="a" style="left:11px;top:14px;width:39px;height:39px;background:#050505"></div><div class="a" style="left:66px;top:9px;width:16px;height:7px;background:linear-gradient(160deg,#c8e4ea 0,#3a9cb8 35%,#1a5868 70%,#082028 100%)"></div><div class="a" style="left:82px;top:9px;width:3px;height:7px;background:linear-gradient(#f0f,#00f,#0f0,#ff0,#f00)"></div><div class="a" style="left:64px;top:43px;width:3px;height:3px;background:#000"></div><div class="a" style="left:68px;top:43px;width:15px;height:3px;background:#767676"></div><div class="a" style="left:67px;top:24px;width:10px;height:1px;background:repeating-linear-gradient(90deg,#9a9a9a 0,#9a9a9a 1px,transparent 1px,transparent 2px)"></div><div class="a" style="left:65px;top:27px;width:14px;height:1px;background:repeating-linear-gradient(90deg,#8c8c8c 0,#8c8c8c 2px,transparent 2px,transparent 3px)"></div><div class="a" style="left:66px;top:30px;width:12px;height:1px;background:repeating-linear-gradient(90deg,#9a9a9a 0,#9a9a9a 1px,transparent 1px,transparent 2px)"></div><div class="a" style="left:63px;top:20px;width:2px;height:2px;background:#777;box-shadow:0 13px 0 #777,1px -12px 0 #777,4px -7px 0 #6a6a6a"></div><div class="a" style="left:3px;top:59px;width:87px;height:2px;background:#444"></div><div class="a" style="left:8px;top:1px;width:8px;height:2px;background:linear-gradient(90deg,#f0f,#ff0,#0f0,#f80)"></div><svg style="left:11px;top:14px" width="39" height="39" viewBox="0 0 39 39"><path d="M30.0 21.0L31.5 21.2" stroke="#444" stroke-width="0.600"/><path d="M24.4 23.9L26.8 26.1" stroke="#444" stroke-width="0.600"/><path d="M25.3 25.7L26.8 27.2" stroke="#444" stroke-width="0.600"/><path d="M24.2 14.6L25.8 12.9" stroke="#444" stroke-width="0.600"/><path d="M5.4 15.0L2.1 13.9" stroke="#444" stroke-width="0.600"/><path d="M25.3 12.9L26.7 11.2" stroke="#444" stroke-width="0.600"/><path d="M10.1 31.0L7.7 34.0" stroke="#444" stroke-width="0.600"/><path d="M24.0 25.8L25.0 27.2" stroke="#444" stroke-width="0.600"/><path d="M20.6 30.3L20.9 33.0" stroke="#444" stroke-width="0.600"/><path d="M19.0 25.5L18.8 27.8" stroke="#444" stroke-width="0.600"/><path d="M11.6 28.0L8.9 30.9" stroke="#444" stroke-width="0.600"/><path d="M15.4 9.1L14.4 6.5" stroke="#444" stroke-width="0.600"/><path d="M16.6 13.7L14.9 10.3" stroke="#444" stroke-width="0.600"/><path d="M22.3 5.0L22.9 1.7" stroke="#444" stroke-width="0.600"/><path d="M11.7 25.8L10.7 26.6" stroke="#444" stroke-width="0.600"/><path d="M15.1 14.6L14.3 13.7" stroke="#444" stroke-width="0.600"/><path d="M21.5 26.9L22.0 28.8" stroke="#444" stroke-width="0.600"/><path d="M25.2 21.4L26.6 21.9" stroke="#444" stroke-width="0.600"/></svg></div><div class="a th" style="left:348px;top:358px;width:90px;height:62px;background:#f8f8f8"><div class="a" style="left:0;top:0;width:90px;height:4px;background:#080808"></div><div class="a" style="left:0;top:0;width:3px;height:3px;background:#3a70d0"></div><div class="a" style="left:4px;top:1px;width:14px;height:1px;background:repeating-linear-gradient(90deg,#ddd 0,#ddd 2px,transparent 2px,transparent 3px)"></div><div class="a" style="left:34px;top:1px;width:10px;height:1px;background:#777"></div><div class="a" style="left:59px;top:1px;width:8px;height:1px;background:#ccc"></div><div class="a" style="left:68px;top:1px;width:6px;height:1px;background:#d8a820"></div><div class="a" style="left:76px;top:1px;width:9px;height:1px;background:#bbb"></div><div class="a" style="left:0;top:4px;width:90px;height:6px;background:#d2d4d8"></div><div class="a" style="left:1px;top:5px;width:6px;height:2px;background:#f0d080"></div><div class="a" style="left:10px;top:5px;width:60px;height:3px;background:repeating-linear-gradient(90deg,#e8f0fa 0,#e8f0fa 4px,#c4d4ea 4px,#c4d4ea 6px,transparent 6px,transparent 9px)"></div><div class="a" style="left:33px;top:5px;width:7px;height:7px;background:#ecc860"></div><div class="a" style="left:0;top:10px;width:90px;height:4px;background:#aaaaaa"></div><div class="a" style="left:33px;top:11px;width:8px;height:1px;background:#e8c050"></div><div class="a" style="left:0;top:14px;width:90px;height:2px;background:#b8b8b8"></div><div class="a" style="left:0;top:14px;width:30px;height:2px;background:#8e8e8e"></div><div class="a" style="left:0;top:16px;width:24px;height:3px;background:#f2f2f2"></div><div class="a" style="left:0;top:19px;width:22px;height:15px;background:#b6b6b6"></div><div class="a" style="left:3px;top:22px;width:1px;height:8px;background:#8a8a8a"></div><div class="a" style="left:14px;top:23px;width:5px;height:1px;background:#8a8a8a;box-shadow:0 4px 0 #8a8a8a,0 8px 0 #808080"></div><div class="a" style="left:4px;top:30px;width:6px;height:1px;background:#808080"></div><div class="a" style="left:24px;top:16px;width:65px;height:33px;background:#060606"></div><div class="a" style="left:24px;top:49px;width:65px;height:2px;background:#c8c8c8"></div><div class="a" style="left:68px;top:49px;width:9px;height:1px;background:#fff"></div><div class="a" style="left:0;top:52px;width:90px;height:1px;background:#cfcfcf"></div><div class="a" style="left:0;top:59px;width:90px;height:1px;background:#d4d4d4"></div><div class="a" style="left:0;top:53px;width:2px;height:2px;background:#d08050"></div></div><div class="a th" style="left:453px;top:366px;width:90px;height:54px;background:#fbfbfb"><div class="a" style="left:0;top:2px;width:83px;height:4.500px;background:#f8c000"></div><div class="a" style="left:15px;top:4px;width:6px;height:1px;background:#fbe080"></div><div class="a" style="left:50px;top:4px;width:8px;height:1px;background:#fbe080"></div><div class="a" style="left:0;top:6.30px;width:83px;height:3.900px;background:#d4e6f6"></div><div class="a" style="left:12.4px;top:7.60px;width:12px;height:1.300px;background:repeating-linear-gradient(90deg,#5a5a64 0,#5a5a64 2px,rgba(90,90,100,0.300) 2px,rgba(90,90,100,0.300) 3px)"></div><div class="a" style="left:35.5px;top:7.70px;width:40px;height:1px;background:#9298a4"></div><div class="a" style="left:79px;top:7.70px;width:1px;height:1px;background:#889"></div><div class="a" style="left:0;top:10.16px;width:83px;height:3.900px;background:#fafcfe"></div><div class="a" style="left:11.4px;top:11.46px;width:14px;height:1.300px;background:repeating-linear-gradient(90deg,#5a5a64 0,#5a5a64 2px,rgba(90,90,100,0.300) 2px,rgba(90,90,100,0.300) 3px)"></div><div class="a" style="left:44.0px;top:11.56px;width:23px;height:1px;background:#9298a4"></div><div class="a" style="left:79px;top:11.56px;width:1px;height:1px;background:#889"></div><div class="a" style="left:0;top:14.02px;width:83px;height:3.900px;background:#d4e6f6"></div><div class="a" style="left:6.4px;top:15.32px;width:24px;height:1.300px;background:repeating-linear-gradient(90deg,#5a5a64 0,#5a5a64 2px,rgba(90,90,100,0.300) 2px,rgba(90,90,100,0.300) 3px)"></div><div class="a" style="left:43.5px;top:15.42px;width:24px;height:1px;background:#9298a4"></div><div class="a" style="left:79px;top:15.42px;width:1px;height:1px;background:#889"></div><div class="a" style="left:0;top:17.88px;width:83px;height:3.900px;background:#fafcfe"></div><div class="a" style="left:11.9px;top:19.18px;width:13px;height:1.300px;background:repeating-linear-gradient(90deg,#5a5a64 0,#5a5a64 2px,rgba(90,90,100,0.300) 2px,rgba(90,90,100,0.300) 3px)"></div><div class="a" style="left:42.5px;top:19.28px;width:26px;height:1px;background:#9298a4"></div><div class="a" style="left:79px;top:19.28px;width:1px;height:1px;background:#889"></div><div class="a" style="left:0;top:21.74px;width:83px;height:3.900px;background:#d4e6f6"></div><div class="a" style="left:10.9px;top:23.04px;width:15px;height:1.300px;background:repeating-linear-gradient(90deg,#5a5a64 0,#5a5a64 2px,rgba(90,90,100,0.300) 2px,rgba(90,90,100,0.300) 3px)"></div><div class="a" style="left:46.5px;top:23.14px;width:18px;height:1px;background:#9298a4"></div><div class="a" style="left:79px;top:23.14px;width:1px;height:1px;background:#889"></div><div class="a" style="left:0;top:25.60px;width:83px;height:3.900px;background:#fafcfe"></div><div class="a" style="left:11.4px;top:26.90px;width:14px;height:1.300px;background:repeating-linear-gradient(90deg,#5a5a64 0,#5a5a64 2px,rgba(90,90,100,0.300) 2px,rgba(90,90,100,0.300) 3px)"></div><div class="a" style="left:43.0px;top:27.00px;width:25px;height:1px;background:#9298a4"></div><div class="a" style="left:79px;top:27.00px;width:1px;height:1px;background:#889"></div><div class="a" style="left:0;top:29.46px;width:83px;height:3.900px;background:#d4e6f6"></div><div class="a" style="left:12.9px;top:30.76px;width:11px;height:1.300px;background:repeating-linear-gradient(90deg,#5a5a64 0,#5a5a64 2px,rgba(90,90,100,0.300) 2px,rgba(90,90,100,0.300) 3px)"></div><div class="a" style="left:46.0px;top:30.86px;width:19px;height:1px;background:#9298a4"></div><div class="a" style="left:79px;top:30.86px;width:1px;height:1px;background:#889"></div><div class="a" style="left:0;top:33.32px;width:83px;height:3.900px;background:#fafcfe"></div><div class="a" style="left:12.9px;top:34.62px;width:11px;height:1.300px;background:repeating-linear-gradient(90deg,#5a5a64 0,#5a5a64 2px,rgba(90,90,100,0.300) 2px,rgba(90,90,100,0.300) 3px)"></div><div class="a" style="left:42.0px;top:34.72px;width:27px;height:1px;background:#9298a4"></div><div class="a" style="left:79px;top:34.72px;width:1px;height:1px;background:#889"></div><div class="a" style="left:0;top:37.18px;width:83px;height:3.900px;background:#d4e6f6"></div><div class="a" style="left:10.9px;top:38.48px;width:15px;height:1.300px;background:repeating-linear-gradient(90deg,#5a5a64 0,#5a5a64 2px,rgba(90,90,100,0.300) 2px,rgba(90,90,100,0.300) 3px)"></div><div class="a" style="left:45.5px;top:38.58px;width:20px;height:1px;background:#9298a4"></div><div class="a" style="left:79px;top:38.58px;width:1px;height:1px;background:#889"></div><div class="a" style="left:0;top:41.04px;width:83px;height:3.900px;background:#fafcfe"></div><div class="a" style="left:10.9px;top:42.34px;width:15px;height:1.300px;background:repeating-linear-gradient(90deg,#5a5a64 0,#5a5a64 2px,rgba(90,90,100,0.300) 2px,rgba(90,90,100,0.300) 3px)"></div><div class="a" style="left:46.0px;top:42.44px;width:19px;height:1px;background:#9298a4"></div><div class="a" style="left:79px;top:42.44px;width:1px;height:1px;background:#889"></div><div class="a" style="left:0;top:44.90px;width:83px;height:3.900px;background:#d4e6f6"></div><div class="a" style="left:12.4px;top:46.20px;width:12px;height:1.300px;background:repeating-linear-gradient(90deg,#5a5a64 0,#5a5a64 2px,rgba(90,90,100,0.300) 2px,rgba(90,90,100,0.300) 3px)"></div><div class="a" style="left:41.0px;top:46.30px;width:29px;height:1px;background:#9298a4"></div><div class="a" style="left:79px;top:46.30px;width:1px;height:1px;background:#889"></div><div class="a" style="left:82.500px;top:6px;width:1.500px;height:43px;background:#aab0b8"></div></div><div class="a" style="left:559px;top:359px;width:91px;height:61px;background:#f8f8f8;border-right:1px solid #9a9a9a;border-bottom:1px solid #a8a8a8;box-shadow:1px 1px 2px rgba(0,0,0,0.250);overflow:hidden"><div class="a" style="left:0;top:1px;width:4px;height:4px;border-radius:2px;background:#3a7ae0"></div><div class="t" style="left:5px;top:0px;font-size:6px;color:#2a6cd0;font-weight:bold;transform:scale(0.570,0.700);transform-origin:0 0">简洁设计明确，让更多人员的指数考评</div><svg style="left:46px;top:11px" width="45" height="50" viewBox="0 0 45 50"><path d="M8 1h22l-1 6 4 2-2 6 2 5-3 3 3 1 12-7v12l-13 6 1 5-2 8H3l2-9-3-5 3-6-4-5 4-6-2-6 5-4z" fill="#c6c6c6"/></svg><div class="a" style="left:20px;top:9.6px;width:5px;height:1px;background:#8c8c8c"></div><div class="a" style="left:27px;top:9.6px;width:4px;height:1px;background:#b0b0b0"></div><div class="a" style="left:50px;top:10.6px;width:20px;height:1px;background:repeating-linear-gradient(90deg,#e4e4e4 0,#e4e4e4 3px,transparent 3px,transparent 4px)"></div><div class="a" style="left:21px;top:14.0px;width:8px;height:1px;background:#8c8c8c"></div><div class="a" style="left:28px;top:14.0px;width:5px;height:1px;background:#b0b0b0"></div><div class="a" style="left:53px;top:15.0px;width:27px;height:1px;background:repeating-linear-gradient(90deg,#e4e4e4 0,#e4e4e4 3px,transparent 3px,transparent 4px)"></div><div class="a" style="left:22px;top:19.3px;width:7px;height:1px;background:#8c8c8c"></div><div class="a" style="left:27px;top:19.3px;width:6px;height:1px;background:#b0b0b0"></div><div class="a" style="left:50px;top:20.3px;width:25px;height:1px;background:repeating-linear-gradient(90deg,#e4e4e4 0,#e4e4e4 3px,transparent 3px,transparent 4px)"></div><div class="a" style="left:20px;top:24.6px;width:6px;height:1px;background:#8c8c8c"></div><div class="a" style="left:28px;top:24.6px;width:7px;height:1px;background:#b0b0b0"></div><div class="a" style="left:53px;top:25.6px;width:23px;height:1px;background:repeating-linear-gradient(90deg,#e4e4e4 0,#e4e4e4 3px,transparent 3px,transparent 4px)"></div><div class="a" style="left:21px;top:30.0px;width:5px;height:1px;background:#8c8c8c"></div><div class="a" style="left:27px;top:30.0px;width:4px;height:1px;background:#b0b0b0"></div><div class="a" style="left:50px;top:31.0px;width:21px;height:1px;background:repeating-linear-gradient(90deg,#e4e4e4 0,#e4e4e4 3px,transparent 3px,transparent 4px)"></div><div class="a" style="left:22px;top:35.4px;width:8px;height:1px;background:#8c8c8c"></div><div class="a" style="left:28px;top:35.4px;width:5px;height:1px;background:#b0b0b0"></div><div class="a" style="left:53px;top:36.4px;width:28px;height:1px;background:repeating-linear-gradient(90deg,#e4e4e4 0,#e4e4e4 3px,transparent 3px,transparent 4px)"></div><div class="a" style="left:20px;top:40.8px;width:7px;height:1px;background:#8c8c8c"></div><div class="a" style="left:27px;top:40.8px;width:6px;height:1px;background:#b0b0b0"></div><div class="a" style="left:50px;top:41.8px;width:26px;height:1px;background:repeating-linear-gradient(90deg,#e4e4e4 0,#e4e4e4 3px,transparent 3px,transparent 4px)"></div><div class="a" style="left:21px;top:46.5px;width:6px;height:1px;background:#8c8c8c"></div><div class="a" style="left:28px;top:46.5px;width:7px;height:1px;background:#b0b0b0"></div><div class="a" style="left:53px;top:47.5px;width:24px;height:1px;background:repeating-linear-gradient(90deg,#e4e4e4 0,#e4e4e4 3px,transparent 3px,transparent 4px)"></div><div class="a" style="left:22px;top:51.6px;width:5px;height:1px;background:#8c8c8c"></div><div class="a" style="left:27px;top:51.6px;width:4px;height:1px;background:#b0b0b0"></div><div class="a" style="left:50px;top:52.6px;width:22px;height:1px;background:repeating-linear-gradient(90deg,#e4e4e4 0,#e4e4e4 3px,transparent 3px,transparent 4px)"></div><div class="a" style="left:20px;top:57.0px;width:8px;height:1px;background:#8c8c8c"></div><div class="a" style="left:28px;top:57.0px;width:5px;height:1px;background:#b0b0b0"></div><div class="a" style="left:53px;top:58.0px;width:20px;height:1px;background:repeating-linear-gradient(90deg,#e4e4e4 0,#e4e4e4 3px,transparent 3px,transparent 4px)"></div><div class="a" style="left:15px;top:7.2px;width:75px;height:1px;background:#cfe2f4"></div><div class="a" style="left:35px;top:16.5px;width:55px;height:1px;background:#cfe2f4"></div><div class="a" style="left:15px;top:27px;width:75px;height:1px;background:#cfe2f4"></div><div class="a" style="left:37px;top:43.5px;width:34px;height:1px;background:#cfe2f4"></div><div class="a" style="left:43px;top:33px;width:40px;height:1px;background:#cfe2f4"></div><div class="a" style="left:47px;top:52px;width:30px;height:1px;background:#cfe2f4"></div></div><svg class="th" style="left:663px;top:329px" width="90" height="90" viewBox="0 0 90 90"><rect width="90" height="90" fill="#050505"/><path d="M14 16L32 32" stroke="#a060c0" stroke-width="1.3" stroke-opacity="0.85"/><path d="M24 19L30 26" stroke="#7060c0" stroke-width="1.2" stroke-opacity="0.85"/><path d="M33 1L37 15" stroke="#3a3aa0" stroke-width="1.2" stroke-opacity="0.85"/><path d="M39 7L41 21" stroke="#2a8080" stroke-width="1.0" stroke-opacity="0.85"/><path d="M44 8L44 33" stroke="#2a8070" stroke-width="1.0" stroke-opacity="0.85"/><path d="M56 2L54 7" stroke="#2a7030" stroke-width="1.0" stroke-opacity="0.85"/><path d="M56 13L50 29" stroke="#2a8040" stroke-width="1.1" stroke-opacity="0.85"/><path d="M90 16L80 22" stroke="#b08848" stroke-width="1.2" stroke-opacity="0.85"/><path d="M80 24L58 36" stroke="#60a030" stroke-width="1.3" stroke-opacity="0.85"/><path d="M78 34L56 41" stroke="#50a040" stroke-width="1.3" stroke-opacity="0.85"/><path d="M85 44L74 45" stroke="#c08848" stroke-width="1.1" stroke-opacity="0.85"/><path d="M84 48L76 47" stroke="#80a040" stroke-width="1.0" stroke-opacity="0.85"/><path d="M90 66L83 63" stroke="#d06868" stroke-width="1.2" stroke-opacity="0.85"/><path d="M78 72L75 69" stroke="#808030" stroke-width="1.0" stroke-opacity="0.85"/><path d="M72 59L58 51" stroke="#308040" stroke-width="1.2" stroke-opacity="0.85"/><path d="M58 82L52 67" stroke="#308050" stroke-width="1.2" stroke-opacity="0.85"/><path d="M52 88L47 61" stroke="#40a060" stroke-width="1.2" stroke-opacity="0.85"/><path d="M47 79L46 63" stroke="#2a8070" stroke-width="1.0" stroke-opacity="0.85"/><path d="M32 80L37 67" stroke="#4060c0" stroke-width="1.2" stroke-opacity="0.85"/><path d="M24 67L35 53" stroke="#3040c0" stroke-width="1.4" stroke-opacity="0.85"/><path d="M22 62L34 52" stroke="#4050d0" stroke-width="1.4" stroke-opacity="0.85"/><path d="M21 75L32 63" stroke="#8050c0" stroke-width="1.2" stroke-opacity="0.85"/><path d="M0 82L14 71" stroke="#d060a0" stroke-width="1.4" stroke-opacity="0.85"/><path d="M10 61L32 51" stroke="#b040b0" stroke-width="1.3" stroke-opacity="0.85"/><path d="M14 51L30 47" stroke="#a040a0" stroke-width="1.1" stroke-opacity="0.85"/><path d="M1 41L18 42" stroke="#c04080" stroke-width="1.2" stroke-opacity="0.85"/><path d="M5 39L28 41" stroke="#a040a0" stroke-width="1.1" stroke-opacity="0.85"/><path d="M0 30L10 33" stroke="#c03050" stroke-width="1.2" stroke-opacity="0.85"/><path d="M11 23L14 25" stroke="#a040a0" stroke-width="1.2" stroke-opacity="0.85"/><path d="M26 58L34 50" stroke="#5060d0" stroke-width="1.2" stroke-opacity="0.85"/><path d="M28 70L34 60" stroke="#6070d0" stroke-width="1.0" stroke-opacity="0.85"/><path d="M40 60L38 70" stroke="#308060" stroke-width="1.0" stroke-opacity="0.85"/><path d="M55 60L60 75" stroke="#308050" stroke-width="1.0" stroke-opacity="0.85"/><path d="M62 55L70 62" stroke="#407030" stroke-width="1.0" stroke-opacity="0.85"/><path d="M36 20L40 30" stroke="#304080" stroke-width="1.0" stroke-opacity="0.85"/><path d="M48 20L47 32" stroke="#206060" stroke-width="1.0" stroke-opacity="0.85"/><path d="M20 44L34 45" stroke="#803080" stroke-width="1.0" stroke-opacity="0.85"/><path d="M60 40L70 38" stroke="#408030" stroke-width="1.0" stroke-opacity="0.85"/><path d="M45.1 51.0L45.5 56.2" stroke="#303030" stroke-width="1"/><path d="M39.3 46.6L32.7 47.7" stroke="#1c4838" stroke-width="1"/><path d="M44.5 49.1L44.0 58.1" stroke="#1c4838" stroke-width="1"/><path d="M39.6 44.4L34.4 43.0" stroke="#203848" stroke-width="1"/><path d="M45.0 48.6L46.0 57.1" stroke="#1c4838" stroke-width="1"/><path d="M44.4 39.7L44.2 36.3" stroke="#303030" stroke-width="1"/><path d="M51.1 47.5L58.8 49.6" stroke="#2a2a50" stroke-width="1"/><path d="M38.5 46.8L30.3 48.2" stroke="#1c4838" stroke-width="1"/><path d="M39.3 49.9L34.8 53.3" stroke="#203848" stroke-width="1"/><path d="M46.6 43.9L49.3 41.3" stroke="#203848" stroke-width="1"/><path d="M44.4 51.7L44.0 59.4" stroke="#2a2a50" stroke-width="1"/><path d="M38.5 49.0L32.9 52.1" stroke="#303030" stroke-width="1"/><path d="M40.0 42.9L32.7 38.6" stroke="#1c4030" stroke-width="1"/><path d="M49.6 39.5L54.0 33.9" stroke="#203848" stroke-width="1"/><path d="M43.4 41.9L41.5 36.0" stroke="#303030" stroke-width="1"/><path d="M39.0 43.1L35.1 41.3" stroke="#303030" stroke-width="1"/><path d="M44.4 48.4L43.8 54.3" stroke="#1c4838" stroke-width="1"/><path d="M50.5 49.3L55.1 52.2" stroke="#203848" stroke-width="1"/><path d="M49.2 46.3L54.7 47.0" stroke="#1c4030" stroke-width="1"/><path d="M50.2 47.3L53.3 48.2" stroke="#303030" stroke-width="1"/><path d="M41.2 52.1L36.8 59.8" stroke="#303030" stroke-width="1"/><path d="M44.9 47.9L45.2 50.9" stroke="#1c4030" stroke-width="1"/><path d="M42.9 44.4L39.5 42.0" stroke="#1c4838" stroke-width="1"/><path d="M43.8 49.2L41.9 56.1" stroke="#2a2a50" stroke-width="1"/><path d="M41.7 52.8L38.4 60.6" stroke="#1c4838" stroke-width="1"/><path d="M39.5 50.7L35.7 54.5" stroke="#303030" stroke-width="1"/></svg>
<div class="t fl" style="left:348px;width:90px;top:280px">1.5.gif</div>
<div class="t fl" style="left:453px;width:90px;top:280px">1.6.gif</div>
<div class="t fl" style="left:558px;width:90px;top:280px">2.1.gif</div>
<div class="t fl" style="left:663px;width:90px;top:280px">2.2.gif</div>
<div class="t fl" style="left:348px;width:90px;top:428px">3.2.gif</div>
<div class="t fl" style="left:443px;width:110px;top:428px">A<span>级推广</span>APP.png</div>
<div class="t fl" style="left:559px;width:90px;top:428px"><span>标题</span>.jpg</div>
<div class="t fl" style="left:654px;width:110px;top:428px"><span>烟花散射效果</span>.jpg</div>
<!-- bottom fields -->
<div class="t od" style="left:340px;top:460px">文件名<span class="mono">(N):</span></div>
<div class="a" style="left:434px;top:454px;width:246px;height:21px;background:#fbfbfb;border:1px solid #7a7a7a"></div>
<div class="t od" style="left:438px;top:459px">烟花散射效果<span class="mono">.jpg</span></div>
<svg style="left:666px;top:462px" width="10" height="6" viewBox="0 0 10 6"><path d="M1 0.800l4 4 4-4" fill="none" stroke="#505050" stroke-width="1.100"/></svg>
<div class="t od" style="left:340px;top:486px">文件类型<span class="mono">(T):</span></div>
<div class="a" style="left:434px;top:482px;width:246px;height:20px;background:#fbfbfb;border:1px solid #adadad"></div>
<div class="t od" style="left:438px;top:486px"><span class="mono" style="letter-spacing:-0.150px">Raster Images</span></div>
<svg style="left:666px;top:490px" width="10" height="6" viewBox="0 0 10 6"><path d="M1 0.800l4 4 4-4" fill="none" stroke="#505050" stroke-width="1.100"/></svg>
<div class="a" style="left:699px;top:455px;width:88px;height:21px;background:#f4f4f4;border:2px solid #0c78d8"></div>
<div class="t od" style="left:722px;top:460px">打开<span class="mono">(O)</span></div>
<div class="a" style="left:699px;top:482px;width:88px;height:21px;background:#f2f2f2;border:1px solid #8a8a8a"></div>
<div class="t od" style="left:731px;top:487px">取消</div>
<!-- cursor -->
<svg style="left:837px;top:450px" width="15" height="23" viewBox="0 0 15 23"><path d="M1.500 2v16.300l3.800-3.600 2.500 6 2.400-1-2.500-5.900h5.200z" fill="#fff" stroke="#10102a" stroke-width="1" stroke-linejoin="miter"/></svg>







</div>
</body>
</html>
